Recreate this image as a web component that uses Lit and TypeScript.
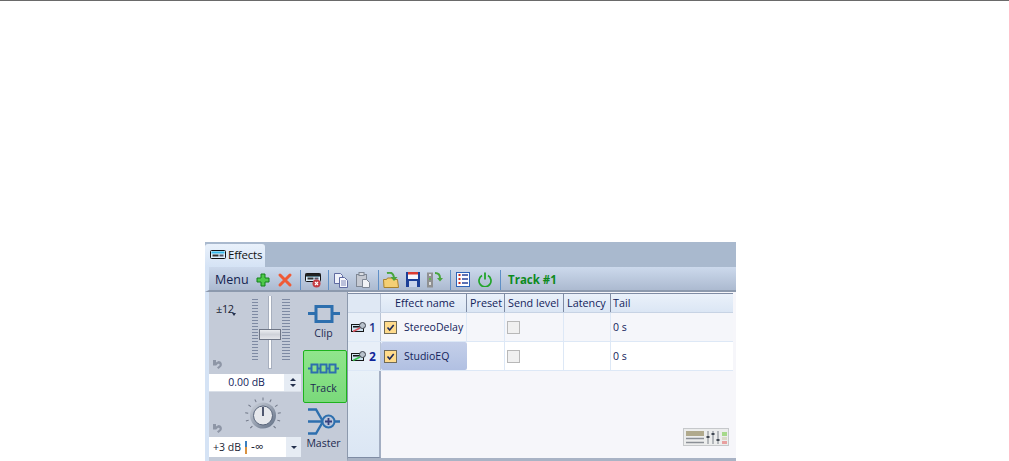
import { LitElement, html, css, svg } from "lit";
import { customElement } from "lit/decorators.js";

const fxIcon = (x: number, y: number) => svg`
  <rect x="${x}" y="${y}" width="15" height="8" rx="1" fill="#dff2ff" stroke="#111"/>
  <rect x="${x + 1}" y="${y + 1}" width="13" height="2" fill="#35b7e8"/>
  <rect x="${x + 2}" y="${y + 4}" width="6" height="2" fill="#333"/>
  <rect x="${x + 9}" y="${y + 4}" width="4" height="2" fill="#556"/>`;

const icons = {
  tab: html`<svg width="16" height="10" viewBox="0 0 16 10">${fxIcon(0.5, 0.5)}</svg>`,
  plus: html`<svg width="16" height="16" viewBox="0 0 16 16"><path d="M6 2h4v4h4v4h-4v4H6v-4H2V6h4z" fill="#4fc94a" stroke="#12801a"/></svg>`,
  x: html`<svg width="16" height="16" viewBox="0 0 16 16"><path d="M3 3l10 10M13 3L3 13" stroke="#ef5a36" stroke-width="3" stroke-linecap="round"/></svg>`,
  fxdel: html`<svg width="16" height="16" viewBox="0 0 16 16">${fxIcon(0.5, 1.5)}<rect x="0.5" y="1.5" width="15" height="3" fill="#222"/><circle cx="11.5" cy="11.5" r="4" fill="#c43d45"/><path d="M10 10l3 3M13 10l-3 3" stroke="#fff" stroke-width="1.2"/></svg>`,
  copy: html`<svg width="16" height="16" viewBox="0 0 16 16"><path d="M1.5 1.5h6l2 2v8h-8z" fill="#eef1fa" stroke="#5f6aa0"/><path d="M6.5 5.5h5l3 3v7h-8z" fill="#f7f8fd" stroke="#5f6aa0"/><path d="M8 9h5M8 11h5M8 13h5" stroke="#7f88b8"/></svg>`,
  paste: html`<svg width="16" height="16" viewBox="0 0 16 16"><rect x="1.5" y="2.5" width="10" height="12" fill="#c5c9d2" stroke="#7f8794"/><rect x="4" y="0.5" width="5" height="3" fill="#d9dce2" stroke="#7f8794"/><path d="M7.5 7.5h4l3 3v5h-7z" fill="#f2f3f6" stroke="#7f8794"/></svg>`,
  open: html`<svg width="16" height="16" viewBox="0 0 16 16"><path d="M.5 7.5h3l1-1.5h6l1 1.5h3l1 8H1z" fill="#f4cf74" stroke="#a8812c"/><path d="M4 1c4-1 6 0 7 4" fill="none" stroke="#49a53d" stroke-width="2"/><path d="M7.500 5h7L11 9z" fill="#49a53d"/></svg>`,
  save: html`<svg width="14" height="15" viewBox="0 0 14 15"><rect width="14" height="15" fill="#1c3f97"/><rect x="2" y="0" width="10" height="7" fill="#f6f7fb"/><rect x="2" y="0" width="10" height="2.500" fill="#dc3b30"/><rect x="3" y="9" width="8" height="6" fill="#c9d4ec"/></svg>`,
  stack: html`<svg width="16" height="16" viewBox="0 0 16 16"><rect x="0" y="0.500" width="6" height="15" fill="#8f9092"/><rect x="2" y="2" width="2" height="2" fill="#ddd"/><rect x="2" y="6" width="2" height="2" fill="#66b84f"/><rect x="2" y="10" width="2" height="3" fill="#ddd"/><path d="M8 1c4 0 5 2 5 5" fill="none" stroke="#49a53d" stroke-width="2"/><path d="M10 6h6l-3 3.500z" fill="#49a53d"/></svg>`,
  list: html`<svg width="14" height="15" viewBox="0 0 14 15"><rect x=".5" y=".5" width="13" height="14" fill="#fbfcff" stroke="#2b62b8"/><path d="M2.500 3h2M2.500 7h2M2.500 11h2" stroke="#c52a20" stroke-width="2"/><path d="M6 3h6M6 7h6M6 11h6" stroke="#27419a" stroke-width="1.400"/></svg>`,
  power: html`<svg width="14" height="15" viewBox="0 0 14 15"><path d="M4 3.600a6 6 0 1 0 6 0" fill="none" stroke="#22a52a" stroke-width="1.700"/><path d="M7 .5v7" stroke="#22a52a" stroke-width="1.800"/></svg>`,
  undo: html`<svg class="undoicon" width="10" height="10" viewBox="0 0 10 10"><path d="M0 1h3v2.400L5.500 2c3 0 4.500 3.600 2.500 5.800L5.500 10 4 8.600l2.400-2.200C7.200 5.400 6 4.200 5 4.800L3.200 6.400H0z" fill="#8e96a6"/></svg>`,
  clip: html`<svg width="32" height="18" viewBox="0 0 32 18"><path d="M0 8.500h7M25 8.500h7" stroke="#2d6fae" stroke-width="3"/><rect x="8" y="1.500" width="16" height="15" fill="none" stroke="#2d6fae" stroke-width="3"/></svg>`,
  track: html`<svg width="31" height="11" viewBox="0 0 31 11"><path d="M0 5.500h31" stroke="#2d6fae" stroke-width="2"/><g fill="#8be087" stroke="#2d6fae" stroke-width="2"><rect x="3.500" y="1.500" width="6" height="8"/><rect x="12.500" y="1.500" width="6" height="8"/><rect x="21.500" y="1.500" width="6" height="8"/></g></svg>`,
  master: html`<svg width="32" height="27" viewBox="0 0 32 27"><path d="M0 1.500h8l7 12M0 13.500h15M0 25.500h8l7-12M26 13.500h6" fill="none" stroke="#2d6fae" stroke-width="2.400"/><circle cx="20.500" cy="13.500" r="6" fill="#b9c6dc" stroke="#2d6fae" stroke-width="2"/><path d="M17 13.500h7M20.500 10v7" stroke="#36407e" stroke-width="1.800"/></svg>`,
};

const ticks = Array.from({ length: 21 }, (_, i) => 7.5 + i * 3);

@customElement("app-root")
export class AppRoot extends LitElement {
  static styles = css`
    :host { display: block; height: 461px; background: #fff; overflow: hidden; font-family: "Open Sans", sans-serif; color: #13235a; }
    .topline { height: 1px; background: #6a6a6a; }
    .panel { width: 531px; height: 219px; margin: 241px 0 0 205px; display: flex; flex-direction: column; background: #a9b9ce; }
    .tabs { height: 25px; padding-top: 2px; box-sizing: border-box; flex: none; }
    .tab { width: 60px; height: 23px; box-sizing: border-box; padding: 0 0 2px 5px; display: flex; align-items: center; gap: 2px; background: linear-gradient(#e9f1fb, #d5e3f5); border-radius: 3px 3px 0 0; font-size: 11.500px; color: #111; letter-spacing: -.2px; }
    .toolbar { height: 25px; flex: none; box-sizing: border-box; display: flex; align-items: center; padding: 2px 0 0 6px; background: linear-gradient(#ccd9ec, #acbad0); border-left: 4px solid #d5e3f5; border-bottom: 2px solid #8c99ad; }
    .menu { width: 40px; font-size: 12.500px; color: #13234f; }
    .group { display: flex; gap: 6px; align-items: center; }
    .group > * { width: 16px; display: flex; justify-content: center; }
    .sep { width: 1px; height: 20px; background: #5f8fc6; margin: 0 4px 0 7px; flex: none; }
    .title { font-weight: 700; color: #0c8a1c; font-size: 11.500px; margin-left: 3px; }
    .body { flex: 1; display: flex; min-height: 0; background: #c4cbd8; border-left: 4px solid #d5e3f5; }
    .left { width: 138px; flex: none; display: flex; box-sizing: border-box; }
    .controls { width: 92px; flex: none; display: flex; flex-direction: column; }
    .sliderbox { position: relative; padding-top: 4px; box-sizing: border-box; height: 82px; display: flex; }
    .slidersvg, .knobsvg, .undoicon { display: block; }
    .scale { position: absolute; left: 7px; top: 9px; font-size: 11px; letter-spacing: -.4px; color: #1a1d33; }
    .scale-arrow { position: absolute; left: 23px; top: 21px; width: 0; height: 0; border-left: 2.500px solid transparent; border-right: 2.500px solid transparent; border-top: 3px solid #24304d; }
    .undo { position: absolute; left: 4px; display: block; }
    .undo.a { top: 67px; }
    .undo.b { top: 31px; }
    .field { height: 18px; flex: none; display: flex; background: #fff; font-size: 10.500px; align-items: stretch; border-bottom: 1px solid #d9dfe8; box-sizing: border-box; }
    .field .val { flex: 1; text-align: center; line-height: 16px; color: #13235a; }
    .spin { width: 17px; background: #e6ecf4; display: flex; flex-direction: column; align-items: center; justify-content: center; gap: 3px; }
    .up, .down, .drop { width: 0; height: 0; border-left: 3px solid transparent; border-right: 3px solid transparent; }
    .up { border-bottom: 3px solid #24304d; }
    .down { border-top: 3px solid #24304d; }
    .drop { border-top: 3px solid #24304d; }
    .knobbox { position: relative; height: 45px; display: flex; justify-content: center; padding: 2px 0 0 16px; box-sizing: border-box; }
    .combo { height: 20px; flex: none; display: flex; background: #fff; font-size: 10.500px; color: #1a1d33; }
    .combo .val { flex: 1; padding-left: 4px; line-height: 20px; display: flex; align-items: center; gap: 4px; }
    .inf { font-size: 12px; }
    .bar { width: 2px; height: 13px; background: linear-gradient(#3a7fc0 50%, #d99240 50%); }
    .arrow { width: 15px; background: #e6ecf4; display: flex; align-items: center; justify-content: center; }
    .modes { flex: 1; display: flex; flex-direction: column; align-items: stretch; margin-left: 2px; }
    .mode { display: flex; flex-direction: column; align-items: center; font-size: 10.500px; color: #1c2a50; box-sizing: border-box; padding-right: 3px; }
    .mode.clip { height: 58px; padding-top: 13px; gap: 3px; }
    .mode.track { height: 53px; padding-top: 12px; gap: 7px; background: linear-gradient(#90e58c, #7ad97b); border: 1px solid #1db31d; border-radius: 2px; }
    .mode.master { padding-top: 5px; gap: 1px; }
    .gridwrap { flex: 1; min-width: 0; display: flex; flex-direction: column; background: #f6f6fa; border-left: 1px solid #8c99ad; border-bottom: 3px solid #a9b3c5; padding-top: 1px; box-sizing: border-box; }
    .grid { flex: 1; display: flex; flex-direction: column; width: 385px; box-sizing: border-box; border-top: 1px solid #7f8ca4; }
    .row { display: grid; grid-template-columns: 33px 86px 38px 59px 47px 1fr; flex: none; box-sizing: border-box; }
    .row.head { height: 19px; background: linear-gradient(#eaf1fa, #dbe6f4); border-bottom: 1px solid #c7d3e4; font-size: 10.800px; line-height: 18px; color: #13235a; }
    .head > div { border-right: 1px solid #7f8ca4; padding-left: 3px; white-space: nowrap; overflow: hidden; box-sizing: border-box; }
    .head > .c0 { border-right: 1px solid #b9c4d6; background: #dfe8f4; }
    .head > .name { text-align: center; }
    .head > div:last-child { border-right: none; padding-left: 2px; }
    .row.data { height: 29px; font-size: 10.500px; border-bottom: 1px solid #dde8f6; }
    .row.odd { background: #f5f6fa; }
    .row.even { background: #fff; }
    .data > div { border-right: 1px solid #dde8f6; display: flex; align-items: center; box-sizing: border-box; }
    .data > .rh { background: #e8eff8; border-right: 1px solid #b9c4d6; padding-left: 3px; gap: 2px; font-size: 12px; font-weight: 600; color: #1b2f88; }
    .rh.active { font-weight: 700; color: #0f2498; }
    .rhicon { display: block; }
    .data > .namecell { padding-left: 3px; gap: 7px; }
    .data > .namecell.sel { background: linear-gradient(#c4cfe9, #b1c0e2); border-radius: 2px; border-right: none; }
    .data > .send { padding-left: 2px; }
    .data > .tail { padding-left: 2px; border-right: none; color: #13235a; }
    .cb { width: 13px; height: 13px; box-sizing: border-box; flex: none; display: block; }
    .gray { background: #f0f0f0; border: 1px solid #b8b8b8; }
    .fill { flex: 1; position: relative; display: flex; min-height: 0; }
    .rhfill { width: 33px; box-sizing: border-box; background: linear-gradient(#e9f1f8, #dbe6f4); border-right: 2px solid #a3aec2; border-bottom: 1px solid #7f8ca4; }
    .corner { position: absolute; right: 4px; bottom: 12px; display: block; }
  `;

  private check() {
    return html`<svg class="cb" viewBox="0 0 13 13"><rect x=".5" y=".5" width="12" height="12" fill="#ffdb8c" stroke="#6f6a58"/><path d="M3.500 6.500l2.200 2.500 4-5" fill="none" stroke="#1e2a5c" stroke-width="1.600"/></svg>`;
  }

  private slider() {
    return svg`<svg class="slidersvg" width="92" height="77" viewBox="0 0 92 77">
      ${ticks.map((y) => svg`<path d="M43 ${y - 4}h6M73 ${y - 4}h8" stroke="#7e8aa3"/>`)}
      <rect x="59.500" y="-1.500" width="3" height="74" fill="#fff" stroke="#a7afbe" stroke-width="1"/>
      <defs><linearGradient id="th" x1="0" y1="0" x2="0" y2="1"><stop offset="0" stop-color="#eef0f3"/><stop offset=".5" stop-color="#cfd2d9"/><stop offset="1" stop-color="#e6e8ec"/></linearGradient></defs>
      <rect x="50.500" y="33.500" width="21" height="10" fill="url(#th)" stroke="#6f7686"/>
    </svg>`;
  }

  private knob() {
    const marks = Array.from({ length: 11 }, (_, i) => -135 + i * 27);
    return svg`<svg class="knobsvg" width="44" height="43" viewBox="0 0 44 43">
      ${marks.map((a) => svg`<line x1="22" y1="3.500" x2="22" y2="6.500" stroke="#6f7686" transform="rotate(${a} 22 21.500)"/>`)}
      <defs><linearGradient id="kn" x1="0" y1="0" x2="1" y2="1"><stop offset="0" stop-color="#cfd4dd"/><stop offset="1" stop-color="#5f6d83"/></linearGradient></defs>
      <circle cx="22" cy="21.500" r="13" fill="url(#kn)"/>
      <circle cx="22" cy="21.500" r="9.500" fill="#e6e8ec" stroke="#59657a"/>
      <path d="M22 13v9" stroke="#2a3350" stroke-width="1.600"/>
    </svg>`;
  }

  render() {
    const rows = [
      { n: 1, name: "StereoDelay", color: "#d9535f", cls: "odd" },
      { n: 2, name: "StudioEQ", color: "#33c24a", cls: "even" },
    ];
    return html`
      <div class="topline"></div>
      <div class="panel">
        <div class="tabs"><div class="tab">${icons.tab}<span>Effects</span></div></div>
        <div class="toolbar">
          <span class="menu">Menu</span>
          <div class="group"><span>${icons.plus}</span><span>${icons.x}</span></div>
          <div class="sep"></div>
          <div class="group"><span>${icons.fxdel}</span></div>
          <div class="sep"></div>
          <div class="group"><span>${icons.copy}</span><span>${icons.paste}</span></div>
          <div class="sep"></div>
          <div class="group"><span>${icons.open}</span><span>${icons.save}</span><span>${icons.stack}</span></div>
          <div class="sep"></div>
          <div class="group"><span>${icons.list}</span><span>${icons.power}</span></div>
          <div class="sep"></div>
          <span class="title">Track #1</span>
        </div>
        <div class="body">
          <div class="left">
            <div class="controls">
              <div class="sliderbox">
                ${this.slider()}
                <span class="scale">±12</span>
                <i class="scale-arrow"></i>
                <span class="undo a">${icons.undo}</span>
              </div>
              <div class="field"><span class="val">0.00 dB</span><span class="spin"><i class="up"></i><i class="down"></i></span></div>
              <div class="knobbox">${this.knob()}<span class="undo b">${icons.undo}</span></div>
              <div class="combo"><span class="val"><span>+3 dB</span><i class="bar"></i><span class="inf">-∞</span></span><span class="arrow"><i class="drop"></i></span></div>
            </div>
            <div class="modes">
              <div class="mode clip">${icons.clip}<span>Clip</span></div>
              <div class="mode track">${icons.track}<span>Track</span></div>
              <div class="mode master">${icons.master}<span>Master</span></div>
            </div>
          </div>
          <div class="gridwrap">
            <div class="grid">
              <div class="row head">
                <div class="c0"></div><div class="name">Effect name</div><div>Preset</div><div>Send level</div><div>Latency</div><div>Tail</div>
              </div>
              ${rows.map((r) => html`
                <div class="row data ${r.cls}">
                  <div class="rh ${r.n === 2 ? "active" : ""}">
                    <svg class="rhicon" width="16" height="11" viewBox="0 0 16 11"><rect x=".5" y="2.500" width="12" height="7" fill="#cfe3f0" stroke="#151515"/><rect x="2" y="4" width="9" height="1.500" fill="#151515"/><circle cx="11.500" cy="3.500" r="3" fill="#b9c2cc" stroke="#3c424c"/><path d="M2 9.500l7-3.500" stroke="${r.color}" stroke-width="1.600"/></svg>
                    <span>${r.n}</span>
                  </div>
                  <div class="namecell ${r.n === 2 ? "sel" : ""}">${this.check()}<span>${r.name}</span></div>
                  <div></div>
                  <div class="send"><span class="cb gray"></span></div>
                  <div></div>
                  <div class="tail">0 s</div>
                </div>`)}
              <div class="fill">
                <div class="rhfill"></div>
                <svg class="corner" width="46" height="18" viewBox="0 0 46 18">
                  <rect x=".5" y=".5" width="45" height="17" fill="#eceded" stroke="#c6c8cb"/>
                  <rect x="3" y="3" width="18" height="5" fill="#b0a98c"/>
                  <path d="M3 10.500h18M3 14.500h18" stroke="#8a8f96" stroke-width="1.500"/>
                  <path d="M25 3v13M30 3v13M35 3v13" stroke="#7c828a"/>
                  <path d="M23.500 9h3M28.500 6h3M33.500 12h3" stroke="#3f4650" stroke-width="2"/>
                  <rect x="39" y="4" width="5" height="4" fill="#a6d98a"/>
                  <rect x="39" y="9" width="5" height="3" fill="#d9d9c8"/>
                  <rect x="39" y="13" width="5" height="3" fill="#e8a0a0"/>
                </svg>
              </div>
            </div>
          </div>
        </div>
      </div>`;
  }
}
